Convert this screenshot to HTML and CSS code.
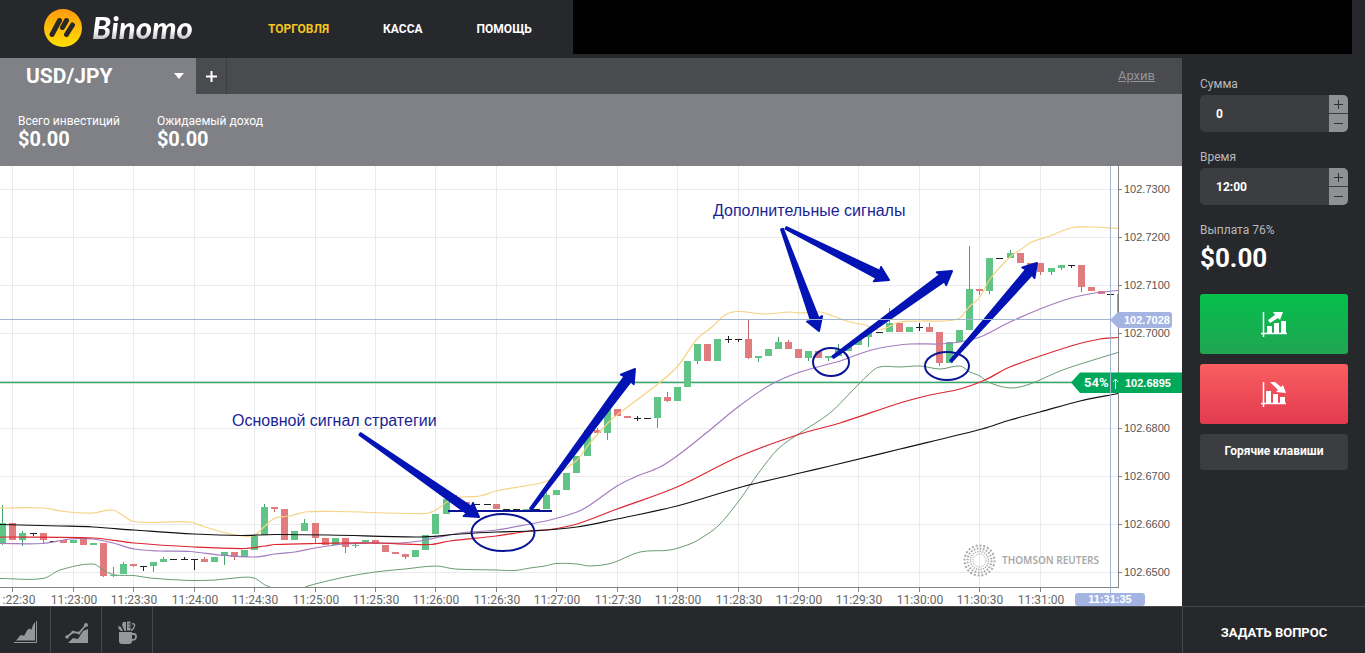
FILE: index.html
```html
<!DOCTYPE html>
<html lang="ru">
<head>
<meta charset="utf-8">
<title>Binomo</title>
<link rel="stylesheet" href="styles.css">
</head>
<body>
<header class="top">
  <a class="logo" href="#">
    <svg class="logo-mark" viewBox="0 0 38 38" aria-hidden="true">
      <defs><linearGradient id="gold" x1="0" y1="0" x2="0" y2="1"><stop offset="0" stop-color="#ff9a10"/><stop offset="1" stop-color="#ffe000"/></linearGradient></defs>
      <circle cx="19" cy="19" r="19" fill="url(#gold)"/>
      <g stroke="#2b2722" stroke-width="5" stroke-linecap="round"><path d="M8 25.500L15.500 11.500M18.500 18.500L22.500 11.500M22.500 25.500L28.500 16"/></g>
    </svg>
    <span class="logo-text">Binomo</span>
  </a>
  <nav class="nav">
    <a class="nav-link active" href="#">ТОРГОВЛЯ</a>
    <a class="nav-link" href="#">КАССА</a>
    <a class="nav-link" href="#">ПОМОЩЬ</a>
  </nav>
  <div class="account"></div>
</header>
<div class="body">
  <main class="main">
    <div class="tabs">
      <button class="tab"><span>USD/JPY</span><span class="caret"></span></button>
      <button class="add" aria-label="Добавить"><svg viewBox="0 0 11 11" aria-hidden="true"><path d="M5.500 0V11M0 5.500H11" stroke="#fff" stroke-width="2"/></svg></button>
      <a class="archive" href="#">Архив</a>
    </div>
    <div class="info">
      <div class="stat"><span class="stat-name">Всего инвестиций</span><b class="stat-value">$0.00</b></div>
      <div class="stat"><span class="stat-name">Ожидаемый доход</span><b class="stat-value">$0.00</b></div>
    </div>
    <svg class="chart" viewBox="0 166 1182 440" preserveAspectRatio="xMaxYMin meet">
      <g id="grid" class="crisp"></g>
      <path d="M0 382.500H1075" stroke="#3aa868" stroke-width="1.500"/>
      <g id="candles" class="crisp"></g>
      <g id="curves" fill="none"></g>
      <g class="watermark">
        <g fill="none" stroke="#a9a9a9">
          <circle cx="979.500" cy="560.500" r="15" stroke-width="2" stroke-dasharray="2 1.900"/>
          <circle cx="979.500" cy="560.500" r="12" stroke-width="2" stroke-dasharray="1.600 1.540"/>
          <circle cx="979.500" cy="560.500" r="9" stroke-width="1.500" stroke-dasharray="1.200 1.150"/>
          <circle cx="979.500" cy="560.500" r="6.500" stroke-width="1" stroke-dasharray="1 .85"/>
        </g>
        <text x="1002" y="564">THOMSON REUTERS</text>
      </g>
      <g class="crisp" fill="none" stroke="#858585"><path d="M1118.500 166V587.500H0"/></g>
      <g id="axes"></g>
      <g id="notes" fill="none" stroke="#0a1496" stroke-width="2">
        <path d="M448 511H552"/>
        <ellipse cx="503" cy="532.500" rx="31.500" ry="18.500"/>
        <ellipse cx="831" cy="362" rx="18" ry="14"/>
        <ellipse cx="947" cy="366" rx="22" ry="14"/>
      </g>
      <text class="note" x="232" y="426">Основной сигнал стратегии</text>
      <text class="note" x="713" y="216">Дополнительные сигналы</text>
      <path d="M1071 382.500L1080 372.500H1182V393H1080Z" fill="#00a85a"/>
      <path class="crisp" d="M0 319.500H1112M1110.500 166V594" stroke="#9fb4d0"/>
      <path d="M1110 320L1118 312H1169Q1172 312 1172 315V325Q1172 328 1169 328H1118Z" fill="#a3b4e2"/>
      <rect x="1075" y="593" width="70" height="13" rx="3" fill="#a3b4e2"/>
      <g class="tag">
        <text x="1124" y="324">102.7028</text>
        <text x="1125" y="387">102.6895</text>
        <text x="1110" y="603" text-anchor="middle">11:31:35</text>
        <text class="tag-percent" x="1084" y="387">54%</text>
        <path d="M1115.500 389V379M1113 382L1115.500 379L1118 382" fill="none" stroke="#d5f5e2"/>
      </g>
    </svg>
    <div class="tools">
      <button class="tool" aria-label="Тип графика"><svg viewBox="0 0 24 24" aria-hidden="true"><path d="M3 20.500L6 17L7 15.500L9 15L11 16L14 10.500L16 8.500L18.500 9.500L20 5L22 2V20.500Z" fill="#96979a"/><path d="M1 22.500H23.500V1" fill="none" stroke="#96979a"/></svg></button>
      <button class="tool" aria-label="Индикаторы"><svg viewBox="0 0 24 24" aria-hidden="true"><path d="M4 23L9 18L14 19L19 11L24 9V23Z" fill="#96979a"/><path d="M3 17L9 12L15 13L22 5" fill="none" stroke="#96979a" stroke-width="1.800"/><g fill="#96979a"><circle cx="3" cy="17" r="1.800"/><circle cx="9" cy="12" r="1.500"/><circle cx="15" cy="13" r="1.500"/><circle cx="22" cy="5" r="2"/></g></svg></button>
      <button class="tool" aria-label="Инструменты"><svg viewBox="0 0 24 24" aria-hidden="true"><g fill="#96979a"><path d="M4 12H17V21Q17 24 14 24H7Q4 24 4 21Z"/><path d="M3 6L6 7L8 11H6Q3 9 3 6ZM8 2L11 2V11H9.500L7 5ZM12 1.500H15.500V10.500H12Z"/></g><path d="M17 14H19Q21 14 21 16.500Q21 20 17 20" fill="none" stroke="#96979a" stroke-width="1.800"/><path d="M17 4Q20 3 19.500 6Q19 9 16 10.500" fill="none" stroke="#96979a" stroke-width="1.400"/><path d="M13.500 4H15.500M13.500 7H15.500" stroke="#27282c"/></svg></button>
    </div>
  </main>
  <aside class="side">
    <form class="order">
      <label class="label" for="sum">Сумма</label>
      <div class="field">
        <input class="field-input" id="sum" type="text" value="0">
        <div class="steps"><button class="step" type="button" aria-label="Сумма больше"><svg viewBox="0 0 9 9"><path d="M4.500 0V9M0 4.500H9" stroke="#303135"/></svg></button><button class="step" type="button" aria-label="Сумма меньше"><svg viewBox="0 0 9 9"><path d="M0 4.500H9" stroke="#303135"/></svg></button></div>
      </div>
      <label class="label" for="time">Время</label>
      <div class="field">
        <input class="field-input" id="time" type="text" value="12:00">
        <div class="steps"><button class="step" type="button" aria-label="Время больше"><svg viewBox="0 0 9 9"><path d="M4.500 0V9M0 4.500H9" stroke="#303135"/></svg></button><button class="step" type="button" aria-label="Время меньше"><svg viewBox="0 0 9 9"><path d="M0 4.500H9" stroke="#303135"/></svg></button></div>
      </div>
      <span class="label">Выплата 76%</span>
      <b class="payout">$0.00</b>
      <button class="deal up" type="button" aria-label="Вверх"><svg viewBox="0 0 26 26"><path d="M2.500 0V25M0 21.500H26" stroke="#fff" stroke-width="1.500"/><path d="M6 14H11V21H6ZM13 11H18V21H13ZM20 9H25V21H20ZM7 8L14 3L12 0H22L19 8L17 6L9 11Z" fill="#fff"/></svg></button>
      <button class="deal down" type="button" aria-label="Вниз"><svg viewBox="0 0 26 26"><path d="M2.500 0V25M0 21.500H25" stroke="#fff" stroke-width="1.500"/><path d="M5 9H10V21H5ZM12 12H17V21H12ZM19 15H24V21H19ZM9 0H14L20 5L22 3L25 11L15 10L17 8Z" fill="#fff"/></svg></button>
      <button class="hotkeys" type="button">Горячие клавиши</button>
    </form>
    <a class="ask" href="#">ЗАДАТЬ ВОПРОС</a>
  </aside>
</div>
<script src="chart.js"></script>
</body>
</html>
```
FILE: styles.css
```css
* { box-sizing: border-box; }
body { margin: 0; min-height: 100vh; display: flex; flex-direction: column; background: #27282c; color: #fff; font: 12px/16px Roboto, "Liberation Sans", sans-serif; }
button, input { font: inherit; color: inherit; border: 0; margin: 0; padding: 0; }
a { color: inherit; text-decoration: none; }
svg { display: block; }
.top { display: flex; height: 58px; padding-right: 13px; }
.logo { display: flex; align-items: center; gap: 10px; width: 268px; padding: 0 0 2px 44px; }
.logo-mark { width: 38px; height: 38px; }
.logo-text { padding: 0 4px 2px 0; font: italic 900 31px/36px Lato, sans-serif; background: linear-gradient(#fff 55%, #b5b5b8 85%); background-clip: text; -webkit-background-clip: text; color: transparent; }
.nav { display: flex; align-items: center; gap: 54px; width: 305px; font-weight: 700; }
.active { color: #f5c51d; }
.account { flex: 1; height: 54px; background: #000; }
.body { flex: 1; display: grid; grid-template-columns: 1fr 183px; }
.main { display: flex; flex-direction: column; min-width: 0; }
.tabs { display: flex; height: 36px; background: #4a4b4f; align-items: stretch; }
.tab { display: flex; align-items: center; justify-content: space-between; width: 196px; padding: 0 12px 0 26px; background: #808186; font-size: 21px; font-weight: 700; }
.caret { border: 5px solid transparent; border-top: 6px solid #fff; border-bottom: 0; }
.add { width: 31px; display: flex; align-items: center; justify-content: center; background: none; border-right: 1px solid #3b3c40; }
.add svg { width: 11px; height: 11px; }
.archive { margin-left: auto; padding-right: 27px; align-self: center; font-size: 13px; color: #939498; text-decoration: underline; }
.info { display: flex; gap: 37px; height: 72px; padding: 19px 18px; background: #808186; }
.stat { display: flex; flex-direction: column; }
.stat-value { font-size: 20px; line-height: 20px; }
.chart { width: 100%; flex: 1; min-height: 0; background: #fff; }
.crisp { shape-rendering: crispEdges; }
.price { font: 11px "Liberation Sans", sans-serif; fill: #555; }
.time { font: 12px Roboto, sans-serif; fill: #666; text-anchor: middle; }
.watermark text { font: 600 10px "Noto Sans", sans-serif; fill: #a9a9a9; }
.note { font: 16px "Liberation Sans", sans-serif; fill: #1a1f96; }
.tag { font: 700 11px "Liberation Sans", sans-serif; fill: #fff; }
.tag-percent { font: 700 13px Roboto, sans-serif; }
.tools { display: flex; height: 47px; border-top: 1px solid #47484b; }
.tool { display: flex; align-items: center; justify-content: center; width: 51px; background: none; border-right: 1px solid #47484b; padding: 3px 0 0; }
.tool svg { width: 24px; height: 24px; }
.side { display: flex; flex-direction: column; }
.order { flex: 1; display: flex; flex-direction: column; padding: 18px 17px 0 18px; }
.label { color: #b9b9bb; line-height: 16px; margin-bottom: 3px; }
.field { display: flex; height: 37px; margin-bottom: 17px; background: #3c3d41; border-radius: 5px; overflow: hidden; }
.field-input { flex: 1; min-width: 0; padding: 0 16px; background: none; font-weight: 700; }
.steps { display: flex; flex-direction: column; gap: 1px; width: 19px; }
.step { flex: 1; display: flex; align-items: center; justify-content: center; background: #909194; }
.step svg { width: 9px; height: 9px; }
.payout { font-size: 26px; line-height: 32px; margin: 1px 0 20px; }
.deal { display: flex; align-items: center; justify-content: center; height: 60px; margin-bottom: 10px; padding-top: 2px; border-radius: 3px; }
.deal svg { width: 26px; height: 26px; }
.up { background: linear-gradient(#04bf4c, #20a552); }
.down { background: linear-gradient(#f95e60, #e33a50); }
.hotkeys { height: 36px; padding-bottom: 2px; background: #3c3d41; border-radius: 3px; font-weight: 700; }
.ask { display: flex; align-items: center; justify-content: center; height: 47px; padding-top: 6px; border-top: 1px solid #47484b; border-left: 1px solid #47484b; font-size: 13px; font-weight: 700; }
```
FILE: chart.js
```js
const NS = "http://www.w3.org/2000/svg";
function add(id, tag, attrs, text) {
  const el = document.createElementNS(NS, tag);
  for (const k in attrs) el.setAttribute(k, attrs[k]);
  if (text) el.textContent = text;
  document.getElementById(id).appendChild(el);
}

// Axes and grid
const times = [12, 73, 133, 194, 254, 315, 375, 435, 496, 556, 617, 677, 738, 798, 858, 919, 979, 1040];
times.forEach((x, i) => {
  const s = 22 * 60 + 30 + i * 30;
  add("grid", "path", { d: `M${x + 0.5} 166V587`, stroke: "#ebebeb" });
  add("axes", "path", { d: `M${x + 0.5} 587V592`, stroke: "#858585" });
  const label = `:${Math.floor(s / 60)}:${s % 60 ? "30" : "00"}`;
  add("axes", "text", { class: "time", x: i ? x + 1 : 19, y: 604 }, i ? "11" + label : label);
});
[189, 237, 285, 333, 381, 428, 476, 524, 572].forEach((y, i) => {
  add("grid", "path", { d: `M0 ${y + 0.5}H1118`, stroke: "#e9ebee" });
  if (i === 4) return;
  add("axes", "path", { d: `M1118 ${y + 0.5}H1122`, stroke: "#858585" });
  add("axes", "text", { class: "price", x: 1124, y: y + 4 }, `102.${7300 - i * 100}`);
});

// Candles: kind (g up, r down, d flat), centre, body top, body bottom, wick top, wick bottom
const candles = `g2 523 544 505 545,r12 523 540,g22 533 540 531 546,d33 533 534 533 536,r43 533 540 533 543,d53 541 542,r63 540 543,g73 540 543,r83 539 545,g93 543 545,r103 543 576 543 577,g113 575 576 567 577,g123 564 574 562 574,r133 564 566 564 567,d143 566 567 566 571,g153 562 566 562 572,g163 559 562 557 562,d173 559 560,d184 559 560 557 560,d194 559 560 559 570,r204 559 562 557 562,g214 557 562,g224 552 556 552 565,r234 552 557 552 560,g244 550 557,g254 536 550,g264 507 535 504 535,r274 507 509 507 512,r284 509 540,g294 531 540,g304 523 531 519 531,r315 523 538 523 543,r325 538 545,g335 538 545,r345 538 547 538 553,g355 545 546 542 548,g365 540 542 540 544,r375 540 544,r385 545 552,r395 552 554,r405 554 557 554 559,g415 550 557,g425 535 550,g435 514 534,g446 499 514,r456 499 503 495 503,r466 502 504,d476 504 505,d487 504 505,r496 504 509,d506 509 510,d516 509 510,g526 509 511,d536 509 510,g546 495 509 493 509,g556 490 495,g566 473 490,g576 456 473,g587 430 456,r597 430 433 428 433,g607 408 433 408 440,r617 409 416,r627 416 418,d637 418 419 416 421,d647 418 419,g657 397 418 397 428,r667 397 401 392 402,g677 387 401,g687 361 387,g697 344 361 344 364,r707 344 361,g717 339 361,d728 339 340 336 343,d738 339 340 339 342,r748 339 358 320 359,g758 356 358 356 362,g768 349 356,g778 342 349 337 349,r788 342 349 340 349,r798 349 358,g808 351 358 351 361,r818 351 358,g828 356 358 356 361,g838 350 356 344 356,g848 345 351,g858 338 345,g868 332 337 332 347,d879 332 333,g889 323 332 308 332,r899 323 332,g909 327 332,d919 327 328 323 331,r929 327 332 323 332,r939 332 363 332 366,g949 342 363,g959 330 342,g969 289 330 246 330,r979 289 291 289 295,g989 258 291 258 294,d999 258 259,g1010 253 258 250 258,r1020 253 263,r1030 263 265,r1040 263 272 263 275,g1051 268 272 268 275,g1061 265 268 265 270,d1071 265 266 265 268,r1081 265 287 265 292,r1091 287 291,r1101 291 294,d1110 294 295`;
const fills = { g: "#5fc486", r: "#e17c7e", d: "#222" };
const wicks = { g: "#46a56b", r: "#c76567", d: "#222" };
candles.split(",").forEach(c => {
  const kind = c[0];
  const [x, top, bottom, high, low] = c.slice(1).split(" ").map(Number);
  if (high) add("candles", "path", { d: `M${x + 0.5} ${high}V${low}`, stroke: wicks[kind] });
  add("candles", "rect", { x: x - 3, y: top, width: 7, height: bottom - top, fill: fills[kind] });
});
add("candles", "rect", { x: 1117, y: 294, width: 2, height: 22, fill: "#d98284" });

// Indicator curves, drawn as smooth splines through their points
const curves = [
  ["#f6d283", 1.2, "0 508 43 508 64 511.5 93 513 113 510 134 521.5 190 522 205 527 235 535 254 535.5 265 526 275 518 290 516 305 512 335 511.5 425 513.5 436 510 450 500 462 497 480 496 496 491 530 485 547 481 560 472 577 460 590 443 607 424 617 415 650 390 677 367 697 339 712 327 725 315 738 311.5 765 314 790 312 800 313 820 312 833 316 850 322 865 325 879 330 900 322 920 321 958 319 970 306 980 297 990 279 1010 257 1020 250 1032 242 1050 236 1071 228 1090 227 1118 228.5"],
  ["#6b9c70", 1, "0 578.5 43 578.5 60 570 93 564 105 571 115 575 134 575.5 150 578 190 580.5 215 580 240 577.5 254 578 265 585 270 587"],
  ["#6b9c70", 1, "305 587 315 584 345 577 375 572 405 569 436 566 455 569 496 570 515 570.5 530 568 545 566 556 563.5 577 564 590 566 612 563 640 552 670 550 690 544 698 540 718 526 738 502 760 471 778 449 800 433 830 413 853 390 868 375 879 367 900 367 920 366 940 369 960 366 970 372 980 376 988 382 1010 388 1030 384 1060 371 1090 361 1118 352.5"],
  ["#a47cc0", 1.2, "0 543.5 43 543.5 70 539 93 539 113 543 134 549 160 551 190 551.5 220 555 254 557 275 554 295 552 315 548 345 544 375 543 400 543 420 541 440 537 460 533 496 530 530 524 550 520 577 512 590 505 617 486 635 477 660 467 677 456 705 434 738 407 770 385 800 372 840 361 862 353 880 348 910 344 940 344 960 342 980 337 1010 322 1040 309 1071 298 1095 293 1118 290.5"],
  ["#dc2630", 1.2, "0 537 93 538 134 543 194 547 245 548.5 265 546 275 544.5 315 543.5 375 543 430 544.5 450 541 496 536 530 531 550 529.5 577 524 617 509 677 487 738 457 800 434 840 423 900 403 930 395 960 389 985 380 1010 367 1071 346 1100 339 1118 337.5"],
  ["#111", 1.2, "0 524.5 60 526 93 527 134 530 194 534 240 535.5 275 534.5 330 535 420 537 460 534 496 532 530 531 577 527 617 519 677 506 738 488 800 473 830 466 900 449 982 429 1010 420 1040 412 1080 401 1118 393.5"]
];
curves.forEach(([stroke, width, list]) => {
  const n = list.split(" ").map(Number);
  const p = [];
  for (let i = 0; i < n.length; i += 2) p.push([n[i], n[i + 1]]);
  let d = `M${p[0]}`;
  for (let i = 0; i < p.length - 1; i++) {
    const a = p[i - 1] || p[i], b = p[i], c = p[i + 1], e = p[i + 2] || c;
    const step = (c[0] - b[0]) / 3;
    const s1 = (c[1] - a[1]) / (c[0] - a[0]), s2 = (e[1] - b[1]) / (e[0] - b[0]);
    d += `C${b[0] + step} ${b[1] + s1 * step} ${c[0] - step} ${c[1] - s2 * step} ${c}`;
  }
  add("curves", "path", { d, stroke, "stroke-width": width });
});

// Arrows: tail x, tail y, tip x, tip y
[[360, 434, 479, 517], [531, 509, 635, 369], [782, 229, 819, 331], [786, 228, 889, 280], [833, 357, 952, 271], [951, 361, 1037, 263]].forEach(([x, y, tx, ty]) => {
  const len = Math.hypot(tx - x, ty - y);
  const angle = Math.atan2(ty - y, tx - x) * 180 / Math.PI;
  add("notes", "path", {
    d: `M0 -1L${len - 12} -4L${len - 13} -8L${len} 0L${len - 13} 8L${len - 12} 4L0 1Z`,
    transform: `translate(${x} ${y}) rotate(${angle})`,
    fill: "#0414b4", stroke: "#0414b4", "stroke-linejoin": "round"
  });
});
```
